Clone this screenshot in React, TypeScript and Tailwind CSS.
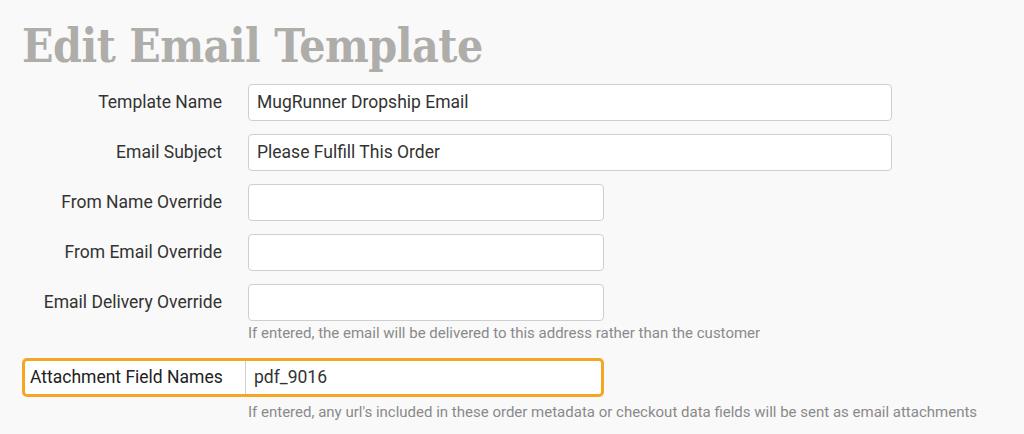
import React from "react";

const Row = ({ label, value, wide, help }: { label: string; value?: string; wide?: boolean; help?: string }) => (
  <div className="flex flex-col">
    <div className="flex items-center h-[37px]">
      <div className="w-[222px] text-right text-[17.5px] text-[#333] whitespace-nowrap">{label}</div>
      <div className={`ml-[26px] h-[37px] rounded-[4px] border border-[#cfcfcf] bg-white flex items-center px-[8px] text-[17.5px] text-[#333] ${wide ? "w-[644px]" : "w-[356px]"}`}>
        {value}
      </div>
    </div>
    {help && <div className="ml-[248px] mt-[2px] text-[15px] text-[#8a8a8a] leading-[20px] whitespace-nowrap">{help}</div>}
  </div>
);

export default function App() {
  return (
    <div className="w-[1024px] h-[434px] bg-[#f9f9f9] overflow-hidden" style={{ fontFamily: "Roboto, 'Liberation Sans', sans-serif" }}>
      <h1 className="pl-[22px] pt-[19px] text-[46px] leading-[54px] font-bold text-[#aeada9] whitespace-nowrap tracking-[-0.5px]" style={{ fontFamily: "'DejaVu Serif Condensed', 'DejaVu Serif', serif", fontStretch: "condensed" }}>
        Edit Email Template
      </h1>
      <div className="mt-[11px] flex flex-col gap-[13px]">
        <Row label="Template Name" value="MugRunner Dropship Email" wide />
        <Row label="Email Subject" value="Please Fulfill This Order" wide />
        <Row label="From Name Override" />
        <Row label="From Email Override" />
        <Row label="Email Delivery Override" help="If entered, the email will be delivered to this address rather than the customer" />
      </div>
      <div className="mt-[15px] ml-[22px] w-[582px] h-[39px] rounded-[5px] border-[3px] border-[#f5a623] bg-white flex items-center">
        <div className="w-[197px] pl-[5px] text-[17.5px] text-[#222] whitespace-nowrap">Attachment Field Names</div>
        <div className="ml-[23px] h-full flex-1 border-l border-[#cfcfcf] flex items-center px-[8px] text-[17.5px] text-[#333]">pdf_9016</div>
      </div>
      <div className="ml-[248px] mt-[5px] text-[15px] text-[#8a8a8a] leading-[20px] whitespace-nowrap">
        If entered, any url's included in these order metadata or checkout data fields will be sent as email attachments
      </div>
    </div>
  );
}
